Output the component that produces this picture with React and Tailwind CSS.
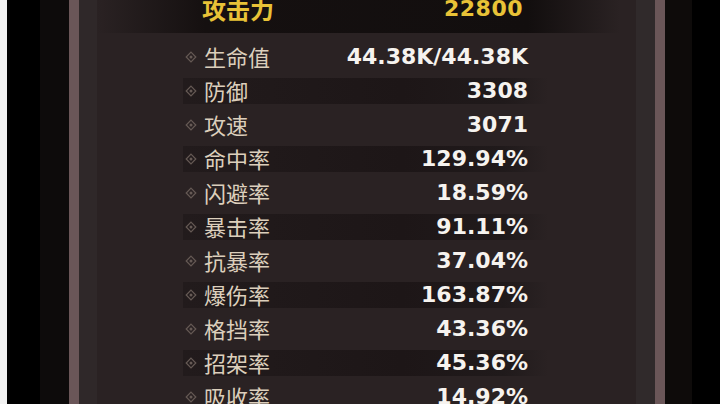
import React from "react";

const rows = [
  ["生命值", "44.38K/44.38K"],
  ["防御", "3308"],
  ["攻速", "3071"],
  ["命中率", "129.94%"],
  ["闪避率", "18.59%"],
  ["暴击率", "91.11%"],
  ["抗暴率", "37.04%"],
  ["爆伤率", "163.87%"],
  ["格挡率", "43.36%"],
  ["招架率", "45.36%"],
  ["吸收率", "14.92%"],
];

function Diamond() {
  return (
    <svg width="12" height="12" viewBox="0 0 12 12" className="shrink-0">
      <path d="M6 1.2 L10.8 6 L6 10.8 L1.2 6 Z" fill="none" stroke="#665a55" strokeWidth="1.2" />
      <circle cx="6" cy="6" r="1.5" fill="#665a55" />
    </svg>
  );
}

export default function App() {
  return (
    <div className="w-[720px] h-[404px] flex overflow-hidden bg-black">
      <div className="w-[7px] bg-[#f2f2f2]" />
      <div className="w-[33px] bg-black" />
      <div className="w-[29px] bg-[#0d0b0b]" />
      <div className="w-[10px] bg-[#6a5658]" />
      <div className="w-[18px] bg-[#2f2829]" />
      <div className="flex-1 bg-[#2a2223] flex flex-col">
        <div className="h-[33px] shrink-0 flex items-start bg-[linear-gradient(90deg,#2a2223_0%,#151010_20%,#120e0e_80%,#2a2223_97%)]">
          <div className="ml-[105px] w-[321px] -mt-[5px] flex justify-between items-center">
            <span className="text-[24px] leading-[28px] font-bold text-[#e8c237] [font-family:'Noto_Sans_CJK_SC',sans-serif]">攻击力</span>
            <span className="text-[22px] leading-[28px] font-bold text-[#e8c237] [font-family:'DejaVu_Sans',sans-serif] tracking-[0.5px]">22800</span>
          </div>
        </div>
        <div className="h-[7px] shrink-0" />
        {rows.map(([label, value], i) => (
          <div key={label} className="h-[34px] shrink-0 flex items-center">
            <div
              className={
                "ml-[86px] w-[365px] h-[26px] flex items-center pl-[2px] pr-[20px] " +
                (i % 2 === 1
                  ? "bg-[linear-gradient(90deg,#221b1c_0%,#1d1617_60%,#201a1b_88%,transparent_100%)]"
                  : "")
              }
            >
              <Diamond />
              <span className="ml-[7px] -mt-[3px] text-[22px] leading-[26px] text-[#dccfbc] [font-family:'Noto_Sans_CJK_SC',sans-serif]">
                {label}
              </span>
              <span className="ml-auto text-[22px] leading-[26px] font-bold text-[#f6f3ef] [font-family:'DejaVu_Sans',sans-serif]">
                {value}
              </span>
            </div>
          </div>
        ))}
      </div>
      <div className="w-[19px] bg-[#302a2b]" />
      <div className="w-[10px] bg-[#6a5658]" />
      <div className="w-[27px] bg-[#0e0b0a]" />
      <div className="w-[28px] bg-black" />
    </div>
  );
}
